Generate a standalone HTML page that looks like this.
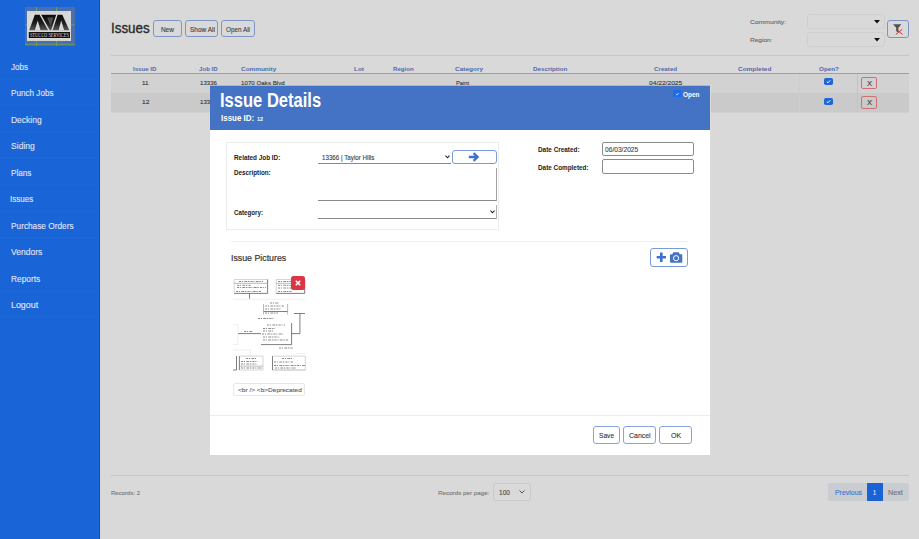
<!DOCTYPE html>
<html><head><meta charset="utf-8"><style>
html,body{margin:0;padding:0;width:919px;height:539px;overflow:hidden;background:#d9d9d9;}
.t{position:absolute;white-space:nowrap;line-height:1;font-family:"Liberation Sans",sans-serif;transform-origin:0 0;}
.r{position:absolute;}
</style></head><body>
<div class="r" style="left:100px;top:0px;width:819px;height:539px;background:#d9d9d9"></div>
<div class="r" style="left:99px;top:0px;width:1px;height:539px;background:#1d4fa3"></div>
<div class="r" style="left:100px;top:0px;width:1px;height:539px;background:#d5d5d5"></div>
<div class="t" style="left:110.64px;top:21px;font-size:14px;color:#2b2b2b;font-weight:normal;transform:scaleX(0.956);-webkit-text-stroke:0.35px #2b2b2b;">Issues</div>
<div class="r" style="left:153px;top:20px;width:29px;height:17px;border:1px solid #8096c6;border-radius:3px;box-sizing:border-box"></div>
<div class="t" style="left:160.90px;top:27px;font-size:6.5px;color:#3a3a3a;font-weight:normal;transform:scaleX(1.000);-webkit-text-stroke:0.1px #3a3a3a;">New</div>
<div class="r" style="left:185px;top:20px;width:33px;height:17px;border:1px solid #8096c6;border-radius:3px;box-sizing:border-box"></div>
<div class="t" style="left:189.50px;top:27px;font-size:6.5px;color:#3a3a3a;font-weight:normal;transform:scaleX(0.996);-webkit-text-stroke:0.1px #3a3a3a;">Show All</div>
<div class="r" style="left:221px;top:20px;width:34px;height:17px;border:1px solid #8096c6;border-radius:3px;box-sizing:border-box"></div>
<div class="t" style="left:226.10px;top:27px;font-size:6.5px;color:#3a3a3a;font-weight:normal;transform:scaleX(0.976);-webkit-text-stroke:0.1px #3a3a3a;">Open All</div>
<div class="t" style="left:750.00px;top:19px;font-size:6.2px;color:#666;font-weight:normal;transform:scaleX(1.094);-webkit-text-stroke:0.1px #666;">Community:</div>
<div class="t" style="left:750.00px;top:37px;font-size:6.2px;color:#666;font-weight:normal;transform:scaleX(1.052);-webkit-text-stroke:0.1px #666;">Region:</div>
<div class="r" style="left:807px;top:14px;width:78px;height:15px;border:1px solid #cfcfcf;border-radius:3px;box-sizing:border-box"></div>
<svg class="r" style="left:874px;top:19.5px" width="6" height="4"><path d="M0 0H6L3 3.5Z" fill="#111"/></svg>
<div class="r" style="left:807px;top:32px;width:78px;height:15px;border:1px solid #cfcfcf;border-radius:3px;box-sizing:border-box"></div>
<svg class="r" style="left:874px;top:37.5px" width="6" height="4"><path d="M0 0H6L3 3.5Z" fill="#111"/></svg>
<div class="r" style="left:887px;top:20px;width:22px;height:18px;border:1px solid #7d93c6;border-radius:3px;box-sizing:border-box"></div>
<svg class="r" style="left:892px;top:23px" width="13" height="13"><path d="M1 1.3H9.4L6.4 4.7V9.5L4.2 8.3V4.7Z" fill="#505050"/><path d="M4.3 6.4L10.6 11.4M10.2 6.4L3.9 11.4" stroke="#c8323a" stroke-width="1"/></svg>
<div class="r" style="left:111px;top:55px;width:798px;height:1px;background:#c6c6c6"></div>
<div class="r" style="left:111px;top:73px;width:798px;height:1px;background:#8ea0c6"></div>
<div class="r" style="left:111px;top:74px;width:798px;height:19px;background:#d2d2d2"></div>
<div class="r" style="left:111px;top:93px;width:798px;height:19px;background:#cacaca"></div>
<div class="r" style="left:111px;top:112px;width:798px;height:1px;background:#d2d2d2"></div>
<div class="r" style="left:857px;top:74px;width:1px;height:38px;background:#c4c4c4"></div>
<div class="r" style="left:799px;top:74px;width:1px;height:38px;background:#cdcdcd"></div>
<div class="r" style="left:621px;top:74px;width:1px;height:38px;background:#cfcfcf"></div>
<div class="t" style="left:133.20px;top:67px;font-size:5.8px;color:#5069ad;font-weight:bold;transform:scaleX(1.050);">Issue ID</div>
<div class="t" style="left:199.00px;top:67px;font-size:5.8px;color:#5069ad;font-weight:bold;transform:scaleX(1.056);">Job ID</div>
<div class="t" style="left:241.40px;top:67px;font-size:5.8px;color:#5069ad;font-weight:bold;transform:scaleX(1.106);">Community</div>
<div class="t" style="left:353.60px;top:67px;font-size:5.8px;color:#5069ad;font-weight:bold;transform:scaleX(1.100);">Lot</div>
<div class="t" style="left:392.90px;top:67px;font-size:5.8px;color:#5069ad;font-weight:bold;transform:scaleX(1.055);">Region</div>
<div class="t" style="left:455.40px;top:67px;font-size:5.8px;color:#5069ad;font-weight:bold;transform:scaleX(1.120);">Category</div>
<div class="t" style="left:532.60px;top:67px;font-size:5.8px;color:#5069ad;font-weight:bold;transform:scaleX(1.075);">Description</div>
<div class="t" style="left:654.00px;top:67px;font-size:5.8px;color:#5069ad;font-weight:bold;transform:scaleX(1.073);">Created</div>
<div class="t" style="left:738.00px;top:67px;font-size:5.8px;color:#5069ad;font-weight:bold;transform:scaleX(1.113);">Completed</div>
<div class="t" style="left:819.00px;top:67px;font-size:5.8px;color:#5069ad;font-weight:bold;transform:scaleX(1.083);">Open?</div>
<div class="t" style="left:141.90px;top:80px;font-size:6px;color:#333;font-weight:normal;transform:scaleX(1.050);-webkit-text-stroke:0.1px #333;">11</div>
<div class="t" style="left:141.90px;top:99px;font-size:6px;color:#333;font-weight:normal;transform:scaleX(1.100);-webkit-text-stroke:0.1px #333;">12</div>
<div class="t" style="left:200.00px;top:80px;font-size:6px;color:#333;font-weight:normal;transform:scaleX(1.018);-webkit-text-stroke:0.1px #333;">13336</div>
<div class="t" style="left:200.00px;top:99px;font-size:6px;color:#333;font-weight:normal;transform:scaleX(1.018);-webkit-text-stroke:0.1px #333;">13336</div>
<div class="t" style="left:241.40px;top:80px;font-size:6px;color:#333;font-weight:normal;transform:scaleX(1.033);-webkit-text-stroke:0.1px #333;">1070 Oaks Blvd</div>
<div class="t" style="left:455.70px;top:80px;font-size:6px;color:#333;font-weight:normal;transform:scaleX(0.957);-webkit-text-stroke:0.1px #333;">Paint</div>
<div class="t" style="left:649.30px;top:80px;font-size:6px;color:#333;font-weight:normal;transform:scaleX(1.107);-webkit-text-stroke:0.1px #333;">04/22/2025</div>
<svg class="r" style="left:824px;top:78px" width="9" height="7"><rect x="0" y="0" width="9" height="7" rx="1.8" fill="#1f66d8"/><path d="M2.8 3.7L4 4.7L6.2 2.4" stroke="#fff" stroke-width="1" fill="none"/></svg>
<svg class="r" style="left:824px;top:98px" width="9" height="7"><rect x="0" y="0" width="9" height="7" rx="1.8" fill="#1f66d8"/><path d="M2.8 3.7L4 4.7L6.2 2.4" stroke="#fff" stroke-width="1" fill="none"/></svg>
<div class="r" style="left:861px;top:77px;width:16px;height:12px;border:1px solid #cc7073;border-radius:2px;box-sizing:border-box"></div>
<div class="t" style="left:866.80px;top:81px;font-size:6.5px;color:#333;font-weight:normal;transform:scaleX(1.150);-webkit-text-stroke:0.1px #333;">X</div>
<div class="r" style="left:861px;top:96px;width:16px;height:13px;border:1px solid #cc7073;border-radius:2px;box-sizing:border-box"></div>
<div class="t" style="left:866.80px;top:100px;font-size:6.5px;color:#333;font-weight:normal;transform:scaleX(1.150);-webkit-text-stroke:0.1px #333;">X</div>
<div class="r" style="left:111px;top:475px;width:798px;height:1px;background:#c6c6c6"></div>
<div class="t" style="left:110.90px;top:490px;font-size:6px;color:#777;font-weight:normal;transform:scaleX(1.003);-webkit-text-stroke:0.1px #777;">Records: 2</div>
<div class="t" style="left:438.00px;top:490px;font-size:6px;color:#777;font-weight:normal;transform:scaleX(1.043);-webkit-text-stroke:0.1px #777;">Records per page:</div>
<div class="r" style="left:492.5px;top:483px;width:38.0px;height:17.5px;border:1px solid #cbcbcb;border-radius:3px;box-sizing:border-box"></div>
<div class="t" style="left:498.90px;top:489px;font-size:7px;color:#444;font-weight:normal;transform:scaleX(0.933);-webkit-text-stroke:0.1px #444;">100</div>
<svg class="r" style="left:518.5px;top:489.7px" width="6" height="4"><path d="M0.5 0.5L3 3L5.5 0.5" stroke="#555" stroke-width="1" fill="none"/></svg>
<div class="r" style="left:828.4px;top:483px;width:80.20000000000005px;height:17.69999999999999px;background:#c9ccd1;border-radius:2px"></div>
<div class="r" style="left:866.8px;top:483px;width:16.100000000000023px;height:17.69999999999999px;background:#1a62d6"></div>
<div class="t" style="left:834.80px;top:490px;font-size:6.8px;color:#3d6ed6;font-weight:normal;transform:scaleX(1.019);-webkit-text-stroke:0.1px #3d6ed6;">Previous</div>
<div class="t" style="left:873.00px;top:490px;font-size:6.8px;color:#e6edfb;font-weight:normal;transform:scaleX(0.825);-webkit-text-stroke:0.1px #e6edfb;">1</div>
<div class="t" style="left:887.90px;top:490px;font-size:6.8px;color:#707070;font-weight:normal;transform:scaleX(1.064);-webkit-text-stroke:0.1px #707070;">Next</div>
<div class="r" style="left:0px;top:0px;width:99px;height:539px;background:#1965d8"></div>
<div class="r" style="left:25px;top:7px;width:50px;height:39px;background:#4a6fae"></div>
<svg class="r" style="left:25px;top:7px" width="50" height="39" viewBox="25 7 50 39"><path d="M25 44.3H75M36.5 7V46M56.5 7V46M25 25H75" stroke="#7fa33a" stroke-width="0.9" fill="none" opacity="0.9"/></svg>
<div class="r" style="left:27px;top:10.8px;width:44.2px;height:30.7px;background:#d8d8d8"></div>
<svg class="r" style="left:25px;top:7px" width="50" height="39" viewBox="25 7 50 39"><defs><linearGradient id="lg" x1="0" y1="0" x2="0" y2="1"><stop offset="0" stop-color="#0a0a0a"/><stop offset="0.55" stop-color="#1e1e1e"/><stop offset="1" stop-color="#5a5a5a"/></linearGradient></defs><path d="M30 12.3H68M30 40.2H68" stroke="#9a9a9a" stroke-width="0.5" stroke-dasharray="1 1.5" opacity="0.7"/><path d="M29.2 30.3L34.8 14.7H62.3L69.3 30.3Z" fill="url(#lg)"/><g stroke="#d8d8d8" fill="none" stroke-width="1.4"><path d="M40 14.2L49.3 30.8M57.1 14.2L51.7 30.8"/></g><g fill="#d8d8d8"><path d="M34.8 30.6L37.7 20.5L40.6 30.6Z"/><path d="M58.6 30.6L61.2 20.5L64.2 30.6Z"/><path d="M47.2 17.5L50.5 25.5L53.6 17.5Z" opacity="0.3"/></g><rect x="28.8" y="32" width="41.2" height="6" fill="#111"/><text x="49.4" y="37.1" font-size="5.6" fill="#dedede" text-anchor="middle" font-family="Liberation Serif" textLength="39" lengthAdjust="spacingAndGlyphs">STUCCO SERVICES</text></svg>
<div class="t" style="left:10.60px;top:62px;font-size:9.4px;color:#e3e6f7;font-weight:normal;transform:scaleX(0.860);-webkit-text-stroke:0.1px #e3e6f7;">Jobs</div>
<div class="t" style="left:10.60px;top:88px;font-size:9.4px;color:#e3e6f7;font-weight:normal;transform:scaleX(0.869);-webkit-text-stroke:0.1px #e3e6f7;">Punch Jobs</div>
<div class="t" style="left:10.60px;top:115px;font-size:9.4px;color:#e3e6f7;font-weight:normal;transform:scaleX(0.903);-webkit-text-stroke:0.1px #e3e6f7;">Decking</div>
<div class="t" style="left:10.60px;top:141px;font-size:9.4px;color:#e3e6f7;font-weight:normal;transform:scaleX(0.915);-webkit-text-stroke:0.1px #e3e6f7;">Siding</div>
<div class="t" style="left:10.60px;top:168px;font-size:9.4px;color:#e3e6f7;font-weight:normal;transform:scaleX(0.870);-webkit-text-stroke:0.1px #e3e6f7;">Plans</div>
<div class="t" style="left:9.74px;top:194px;font-size:9.4px;color:#e3e6f7;font-weight:normal;transform:scaleX(0.858);-webkit-text-stroke:0.1px #e3e6f7;">Issues</div>
<div class="t" style="left:10.60px;top:221px;font-size:9.4px;color:#e3e6f7;font-weight:normal;transform:scaleX(0.883);-webkit-text-stroke:0.1px #e3e6f7;">Purchase Orders</div>
<div class="t" style="left:10.60px;top:247px;font-size:9.4px;color:#e3e6f7;font-weight:normal;transform:scaleX(0.912);-webkit-text-stroke:0.1px #e3e6f7;">Vendors</div>
<div class="t" style="left:10.60px;top:274px;font-size:9.4px;color:#e3e6f7;font-weight:normal;transform:scaleX(0.888);-webkit-text-stroke:0.1px #e3e6f7;">Reports</div>
<div class="t" style="left:10.60px;top:300px;font-size:9.4px;color:#e3e6f7;font-weight:normal;transform:scaleX(0.945);-webkit-text-stroke:0.1px #e3e6f7;">Logout</div>
<div class="r" style="left:0px;top:78px;width:99px;height:2px;background:rgba(255,255,255,0.01)"></div>
<div class="r" style="left:0px;top:104px;width:99px;height:2px;background:rgba(255,255,255,0.01)"></div>
<div class="r" style="left:0px;top:131px;width:99px;height:2px;background:rgba(255,255,255,0.01)"></div>
<div class="r" style="left:0px;top:157px;width:99px;height:2px;background:rgba(255,255,255,0.01)"></div>
<div class="r" style="left:0px;top:184px;width:99px;height:2px;background:rgba(255,255,255,0.01)"></div>
<div class="r" style="left:0px;top:210px;width:99px;height:2px;background:rgba(255,255,255,0.01)"></div>
<div class="r" style="left:0px;top:237px;width:99px;height:2px;background:rgba(255,255,255,0.01)"></div>
<div class="r" style="left:0px;top:263px;width:99px;height:2px;background:rgba(255,255,255,0.01)"></div>
<div class="r" style="left:0px;top:290px;width:99px;height:2px;background:rgba(255,255,255,0.01)"></div>
<div class="r" style="left:0px;top:316px;width:99px;height:2px;background:rgba(255,255,255,0.01)"></div>
<div class="r" style="left:210px;top:85px;width:500px;height:370px;background:#fff"></div>
<div class="r" style="left:210px;top:85px;width:500px;height:45px;background:#4472c4"></div>
<div class="r" style="left:210px;top:85px;width:500px;height:1px;background:#a3b7df"></div>
<div class="r" style="left:710px;top:85px;width:1px;height:370px;background:#dcdcda"></div>
<div class="t" style="left:220.45px;top:91px;font-size:19.5px;color:#fff;font-weight:bold;transform:scaleX(0.848);">Issue Details</div>
<div class="t" style="left:221.00px;top:114px;font-size:9.2px;color:#fff;font-weight:bold;transform:scaleX(0.868);">Issue ID:</div>
<div class="t" style="left:257.00px;top:117px;font-size:5.5px;color:#fff;font-weight:bold;transform:scaleX(1.000);">12</div>
<svg class="r" style="left:673px;top:90px" width="9" height="7"><rect width="8.5" height="7" rx="1.6" fill="#1a6cf2"/><path d="M3.2 4.3L3.9 4.9L5.4 3.2" stroke="#fff" stroke-width="0.9" fill="none"/></svg>
<div class="t" style="left:683.00px;top:92px;font-size:6.4px;color:#fff;font-weight:bold;transform:scaleX(1.006);">Open</div>
<div class="r" style="left:226px;top:142px;width:272.5px;height:88px;border:1px solid #ececec;box-sizing:border-box"></div>
<div class="t" style="left:233.90px;top:155px;font-size:6.4px;color:#222;font-weight:bold;transform:scaleX(0.996);">Related Job ID:</div>
<div class="t" style="left:233.90px;top:170px;font-size:6.4px;color:#222;font-weight:bold;transform:scaleX(0.984);">Description:</div>
<div class="t" style="left:233.90px;top:210px;font-size:6.4px;color:#222;font-weight:bold;transform:scaleX(0.973);">Category:</div>
<div class="r" style="left:318px;top:163px;width:133px;height:1px;background:#8a8a8a"></div>
<div class="t" style="left:322.20px;top:155px;font-size:6.4px;color:#3a3a3a;font-weight:normal;transform:scaleX(0.972);-webkit-text-stroke:0.1px #3a3a3a;">13366 | Taylor Hills</div>
<svg class="r" style="left:444.5px;top:154.5px" width="5" height="4"><path d="M0.5 0.7L2.5 2.8L4.5 0.7" stroke="#222" stroke-width="1.1" fill="none"/></svg>
<div class="r" style="left:451.5px;top:149.5px;width:45.0px;height:14.0px;border:1px solid #7a9ad9;border-radius:3px;box-sizing:border-box"></div>
<svg class="r" style="left:468px;top:152px" width="12" height="10"><path d="M0.8 5H9.5M5.6 1.2L9.6 5L5.6 8.8" stroke="#3f6fd0" stroke-width="2.3" fill="none"/></svg>
<div class="r" style="left:318px;top:200px;width:179px;height:1px;background:#8a8a8a"></div>
<div class="r" style="left:496px;top:168px;width:1px;height:33px;background:#a0a0a0"></div>
<div class="r" style="left:318px;top:218px;width:179px;height:1px;background:#8a8a8a"></div>
<div class="r" style="left:496px;top:205px;width:1px;height:14px;background:#b0b0b0"></div>
<svg class="r" style="left:489.5px;top:209.5px" width="5" height="4"><path d="M0.5 0.7L2.5 2.8L4.5 0.7" stroke="#222" stroke-width="1.1" fill="none"/></svg>
<div class="t" style="left:538.00px;top:147px;font-size:6.4px;color:#222;font-weight:bold;transform:scaleX(1.000);">Date Created:</div>
<div class="t" style="left:538.00px;top:165px;font-size:6.4px;color:#222;font-weight:bold;transform:scaleX(0.996);">Date Completed:</div>
<div class="r" style="left:602px;top:142px;width:92px;height:14px;border:1px solid #8c8c8c;border-radius:2px;box-sizing:border-box"></div>
<div class="r" style="left:602px;top:159px;width:92px;height:15px;border:1px solid #8c8c8c;border-radius:2px;box-sizing:border-box"></div>
<div class="t" style="left:604.90px;top:147px;font-size:6.4px;color:#444;font-weight:normal;transform:scaleX(1.038);-webkit-text-stroke:0.1px #444;">06/03/2025</div>
<div class="r" style="left:231px;top:240.5px;width:457px;height:1.0px;background:#eef0f2"></div>
<div class="t" style="left:230.67px;top:253px;font-size:9.5px;color:#333;font-weight:normal;transform:scaleX(0.925);-webkit-text-stroke:0.2px #333;">Issue Pictures</div>
<div class="r" style="left:650px;top:248px;width:38px;height:19px;border:1px solid #7a9ad9;border-radius:3px;box-sizing:border-box"></div>
<svg class="r" style="left:656px;top:252px" width="28" height="11"><path d="M5.3 0.5V10M0.7 5.2H10" stroke="#3f6fd0" stroke-width="2.6"/><path d="M15 2.3H16.3L17.3 0.3H22.8L23.8 2.3H25.3Q26.3 2.3 26.3 3.3V9.8Q26.3 10.8 25.3 10.8H15Q14 10.8 14 9.8V3.3Q14 2.3 15 2.3Z" fill="#4472c4"/><circle cx="20.1" cy="6.2" r="2.6" fill="none" stroke="#fff" stroke-width="1"/></svg>
<svg class="r" style="left:232px;top:276px" width="76" height="98" viewBox="232 276 76 98"><g fill="none" stroke="#c4c4c4" stroke-width="0.7"><path d="M234.2 293.4V279.5H267.6M276.2 293.4V279.5H304.7"/><path d="M263 356.1V370M239.4 356.1H263M239.4 370H263M272.5 356.1H305.3V370"/></g><g fill="none" stroke="#e2e2e2" stroke-width="0.6"><path d="M233 299.3H305M233 324.5H238V344.5H233M233 350H250.5V356M296 353.5H305"/></g><g fill="none" stroke="#484848" stroke-width="0.7"><path d="M267.6 279.5V293.4H234.2M249.5 293.4V298.7"/><path d="M304.7 279.5V293.4H276.2"/><path d="M263.5 311.5H287.6M294 313.5H305M299.9 314V333.6H291.6M238.2 333.6H261"/><path d="M291.6 323V344.6H261"/><path d="M239.4 356.1V370M272.5 356.1V370M236.5 356V370H233"/></g><g fill="none" stroke="#8a8a8a" stroke-width="0.6"><path d="M234.2 283.3H267.6M276.2 283.3H304.7M263.5 304V314.5M287.6 304V314.5M239.4 366.1H263M272.5 370H305.3"/></g><g stroke="#666" stroke-width="0.75" stroke-dasharray="2.2 0.8 1 1.3 3 0.7 1.4 1" fill="none"><path d="M239 281.5H263M237 285.3H251M237 287.5H266M236 291.5H262"/><path d="M278 281.5H300M278 285.3H294M278 288H293M278 291.5H292"/><path d="M270 303H279M265 306H284M265 309H281M265 313H278"/><path d="M267 325H285M263 328.5H275M263 331H273M262 334H283M263 337H280M263 340H289"/><path d="M258 318.5H274M279 348H293M244 331.5H253"/><path d="M246 358.5H256M241 361.5H258M241 364H257M241 368H262"/><path d="M282 358.5H292M274 362H293M274 365.5H305M275 368H296"/></g></svg>
<div class="r" style="left:290.6px;top:276.4px;width:14.099999999999966px;height:13.900000000000034px;background:#dc3545;border-radius:2.5px"></div>
<svg class="r" style="left:293.6px;top:279.4px" width="8" height="8"><path d="M1.8 1.8L6.2 6.2M6.2 1.8L1.8 6.2" stroke="#fff" stroke-width="1.6"/></svg>
<div class="r" style="left:233.2px;top:382.5px;width:72.0px;height:13.0px;border:1px solid #e6e6ec;border-radius:2px;box-sizing:border-box"></div>
<div class="t" style="left:237.80px;top:387px;font-size:6px;color:#5a5a6e;font-weight:normal;transform:scaleX(1.086);-webkit-text-stroke:0.1px #5a5a6e;">&lt;br /&gt; &lt;b&gt;Deprecated</div>
<div class="r" style="left:210px;top:415px;width:500px;height:1px;background:#e9ecef"></div>
<div class="r" style="left:593px;top:426px;width:27px;height:18px;border:1px solid #88a3dc;border-radius:3px;box-sizing:border-box"></div>
<div class="t" style="left:598.80px;top:432px;font-size:7.2px;color:#333;font-weight:normal;transform:scaleX(0.919);-webkit-text-stroke:0.1px #333;">Save</div>
<div class="r" style="left:623px;top:426px;width:33px;height:18px;border:1px solid #88a3dc;border-radius:3px;box-sizing:border-box"></div>
<div class="t" style="left:628.70px;top:432px;font-size:7.2px;color:#333;font-weight:normal;transform:scaleX(0.968);-webkit-text-stroke:0.1px #333;">Cancel</div>
<div class="r" style="left:659px;top:426px;width:33px;height:18px;border:1px solid #88a3dc;border-radius:3px;box-sizing:border-box"></div>
<div class="t" style="left:670.60px;top:432px;font-size:7.2px;color:#333;font-weight:normal;transform:scaleX(0.980);-webkit-text-stroke:0.1px #333;">OK</div>
</body></html>
